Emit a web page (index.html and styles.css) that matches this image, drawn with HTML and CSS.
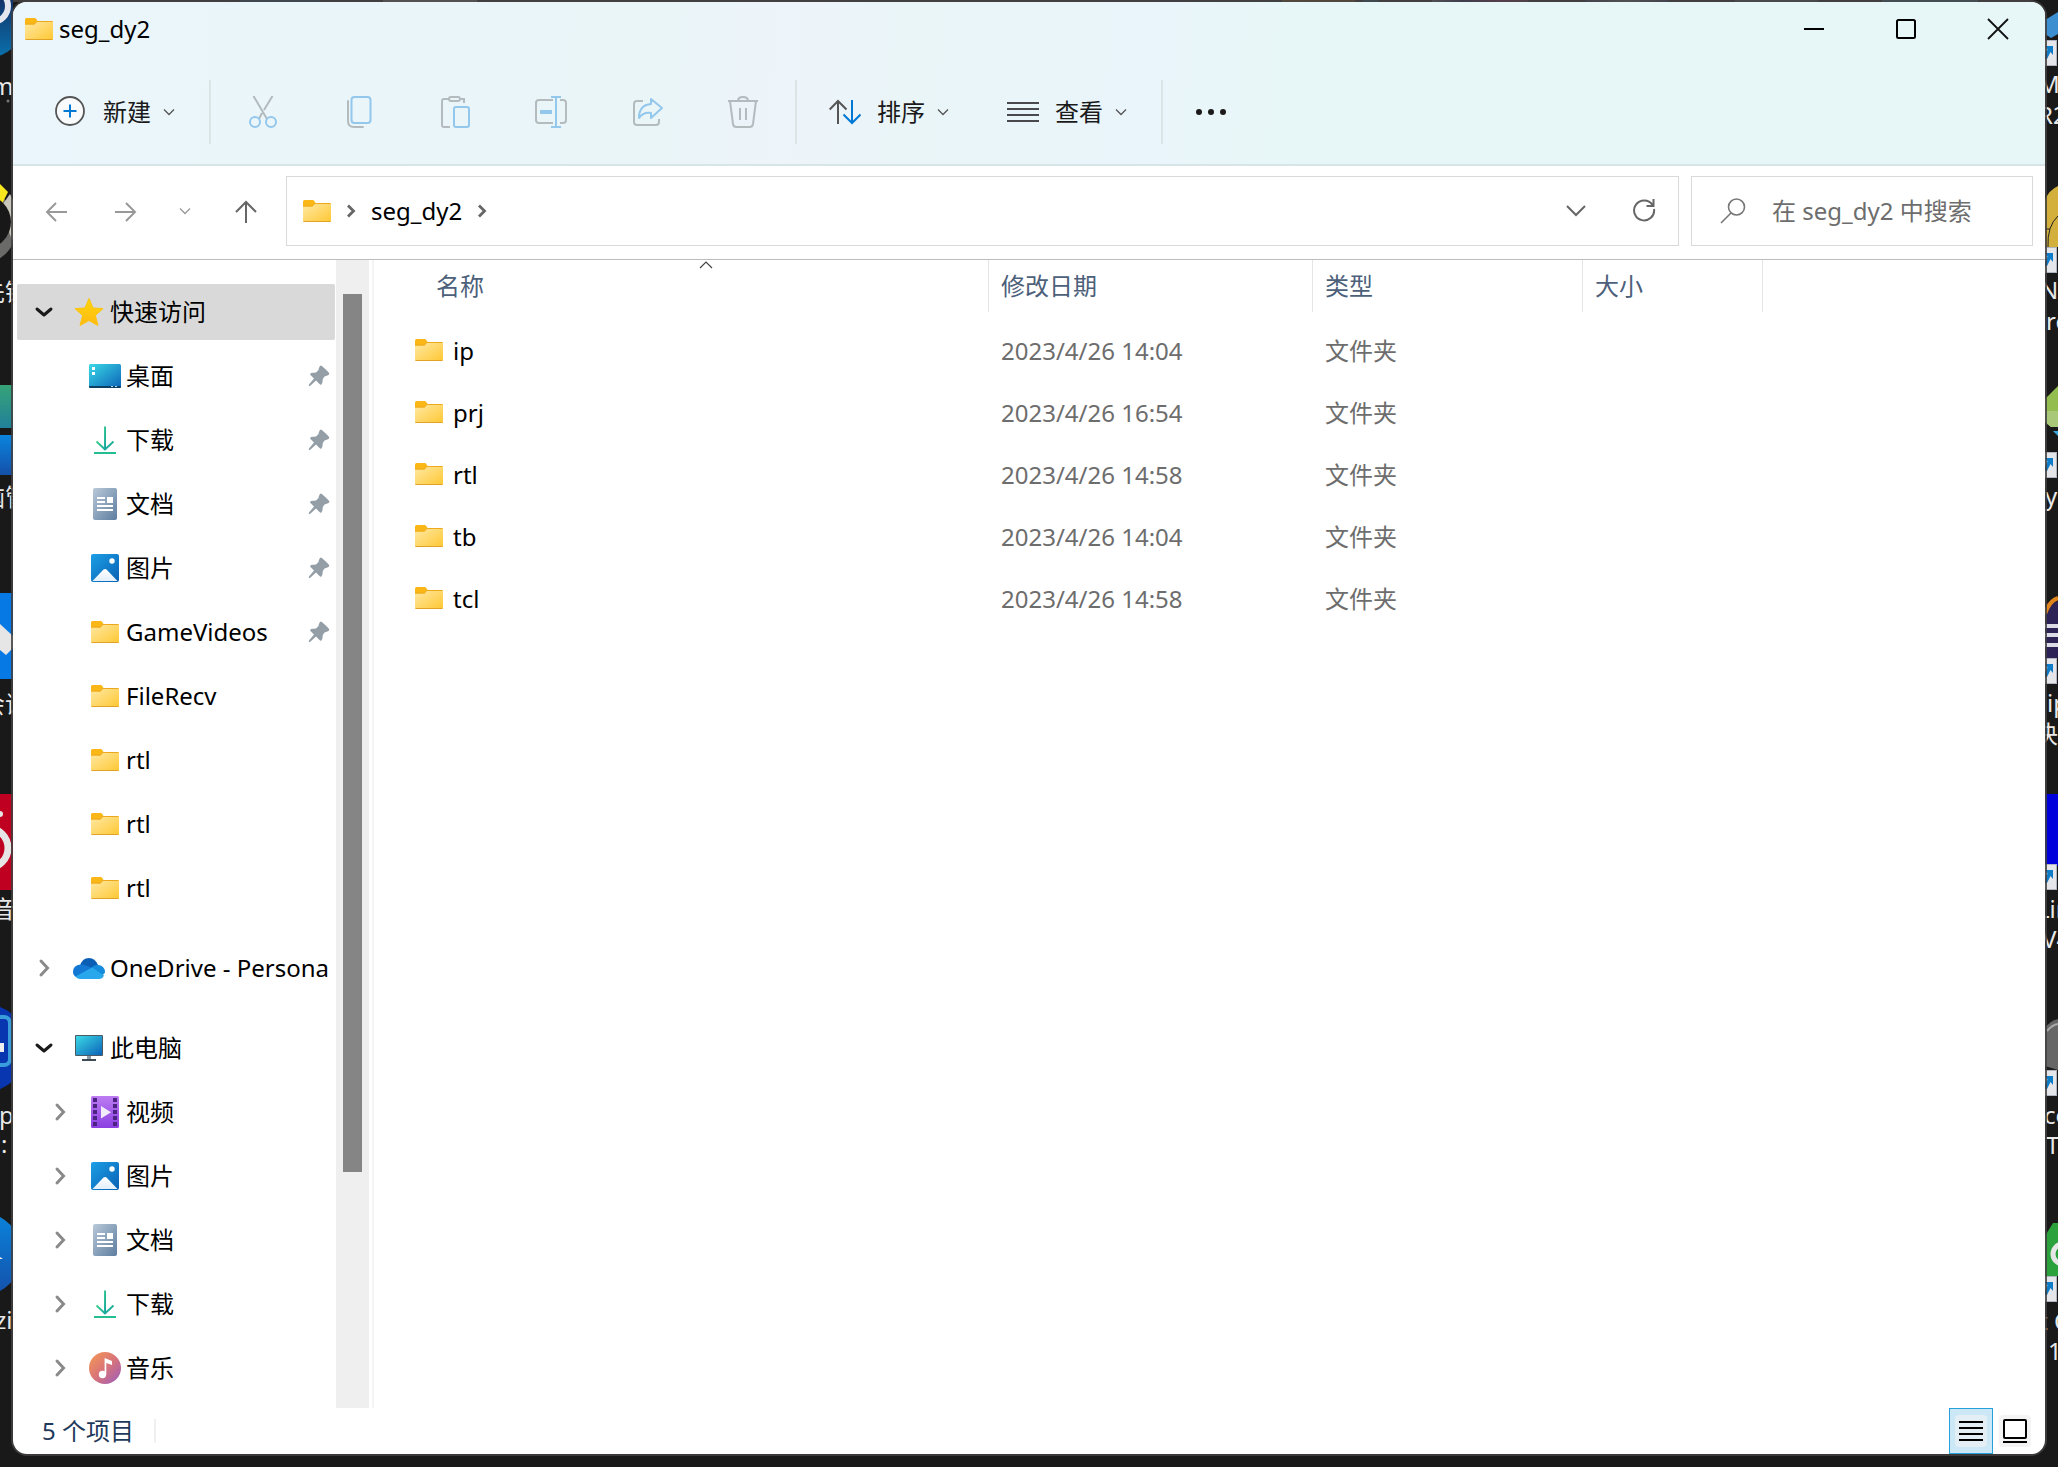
FILE: index.html
```html
<!DOCTYPE html>
<html lang="zh-CN">
<head>
<meta charset="utf-8">
<meta name="viewport" content="width=device-width, initial-scale=1">
<title>seg_dy2</title>
<link rel="stylesheet" href="styles.css">
</head>
<body>
<svg class="defs" width="0" height="0" aria-hidden="true">
  <defs>
    <linearGradient id="gFolder" x1="0" y1="0" x2="1" y2="1"><stop offset="0" stop-color="#ffe9a6"/><stop offset="1" stop-color="#ffc833"/></linearGradient>
    <linearGradient id="gScreen" x1="0" y1="0" x2="1" y2="1"><stop offset="0" stop-color="#3ad9e6"/><stop offset="1" stop-color="#0c63b8"/></linearGradient>
    <linearGradient id="gDown" x1="0" y1="0" x2="1" y2="1"><stop offset="0" stop-color="#3fd190"/><stop offset="1" stop-color="#0a9aa2"/></linearGradient>
    <linearGradient id="gDoc" x1="0" y1="0" x2="1" y2="1"><stop offset="0" stop-color="#b9c9d9"/><stop offset="1" stop-color="#5d7d9f"/></linearGradient>
    <linearGradient id="gPic" x1="0" y1="0" x2="1" y2="1"><stop offset="0" stop-color="#1c9fe6"/><stop offset="1" stop-color="#0960b3"/></linearGradient>
    <linearGradient id="gSnow" x1="0" y1="0" x2="0" y2="1"><stop offset="0" stop-color="#fff"/><stop offset="1" stop-color="#e2effb"/></linearGradient>
    <linearGradient id="gVideo" x1="0" y1="0" x2="0" y2="1"><stop offset="0" stop-color="#bd7cf2"/><stop offset="1" stop-color="#8a3fe2"/></linearGradient>
    <linearGradient id="gMusic" x1="0" y1="0" x2="1" y2="1"><stop offset="0" stop-color="#f59a50"/><stop offset=".5" stop-color="#d97478"/><stop offset="1" stop-color="#9a5cc0"/></linearGradient>
    <linearGradient id="gStar" x1="0" y1="0" x2="0" y2="1"><stop offset="0" stop-color="#ffd60a"/><stop offset="1" stop-color="#fdb913"/></linearGradient>
    <linearGradient id="gNavy" x1="0" y1="0" x2="0" y2="1"><stop offset="0" stop-color="#161a4e"/><stop offset="1" stop-color="#0a72ad"/></linearGradient>
    <linearGradient id="gTeal" x1="0" y1="0" x2="0" y2="1"><stop offset="0" stop-color="#36a377"/><stop offset="1" stop-color="#21809a"/></linearGradient>
    <linearGradient id="gBlue" x1="0" y1="0" x2="0" y2="1"><stop offset="0" stop-color="#0a84dc"/><stop offset="1" stop-color="#1450aa"/></linearGradient>
  </defs>
  <symbol id="folder" viewBox="0 0 28 22">
    <path d="M0 1.5Q0 0 1.5 0H9.5Q10.6 0 11.3 1L12.5 3V8H0z" fill="#fbb715"/>
    <path d="M0 6.5H9.5L12.2 3H27Q28 3 28 4V21Q28 22 27 22H1Q0 22 0 21z" fill="url(#gFolder)"/>
    <path d="M0 6H9.3L12 3.5H27.5" fill="none" stroke="#eda91e"/>
    <path d="M.5 21.5H27.5" stroke="#e3a126"/>
  </symbol>
  <symbol id="star" viewBox="0 0 32 32"><path d="M16 2.5L20 12 30 12.6 22.4 19.4 25 29.5 16 24.600 7 29.500 9.600 19.400 2 12.600 12 12z" fill="url(#gStar)" stroke="#fdc40c" stroke-linejoin="round"/></symbol>
  <symbol id="desktop" viewBox="0 0 32 32"><rect y="4" width="32" height="24" rx="1.500" fill="url(#gScreen)"/><path d="M0 26H32V26.500Q32 28 30.500 28H1.500Q0 28 0 26.500z" fill="#0b3f63"/><path d="M3 7h3v3h-3zM3 12h3v3h-3z" fill="#fff"/><path d="M22 26.500h2M26 26.500h2" stroke="#b8d8f0"/></symbol>
  <symbol id="download" viewBox="0 0 32 32"><path d="M15 2.500H17V26H15z" fill="url(#gDown)"/><path d="M7.500 17.500L16 25.500 24.500 17.500" fill="none" stroke="url(#gDown)" stroke-width="2"/><rect x="5" y="28" width="22" height="2" fill="#24bd92"/></symbol>
  <symbol id="document" viewBox="0 0 32 32"><rect x="4" width="24" height="32" rx="2" fill="url(#gDoc)"/><path d="M8 9h8v2h-8zM8 13h8v2h-8zM18 9h6v6h-6zM8 17h16v2h-16zM8 21h16v2h-16z" fill="#fff"/></symbol>
  <symbol id="picture" viewBox="0 0 32 32"><rect x="2" y="2" width="28" height="28" rx="2" fill="url(#gPic)"/><path d="M3.500 29L14.500 17.600Q16 16.300 17.500 17.600L28.500 29z" fill="url(#gSnow)"/><circle cx="23" cy="9" r="2.700" fill="#fff"/></symbol>
  <symbol id="video" viewBox="0 0 32 32"><rect x="2" width="28" height="32" rx="1.500" fill="url(#gVideo)"/><path d="M6 2V32M26 2V32" stroke="#4c2382" stroke-width="4" stroke-dasharray="4 2"/><path d="M12 10V22.500L22 16.200z" fill="#f1eaf9"/></symbol>
  <symbol id="music" viewBox="0 0 32 32"><circle cx="16" cy="16" r="16" fill="url(#gMusic)"/><circle cx="13.500" cy="22.500" r="3.700" fill="#fff"/><path d="M15.600 22.500V6L23 9V13L17.300 11V22.500z" fill="#fff"/></symbol>
  <symbol id="cloud" viewBox="0 0 32 32"><path d="M7 14Q9 6 16 6 22 6 25 13L17 18z" fill="#0a5fb4"/><path d="M0 20Q0 13 7.500 12.500 11 12 19 16L5 26Q0 24 0 20z" fill="#1278d3"/><path d="M18 16Q21 12.500 25.500 13 32 14 32 20.500L28 25z" fill="#158bdc"/><path d="M2.500 24.500L19 15.500 31 23.500Q29.500 27 26 27H7Q4.500 27 2.500 24.500z" fill="#29a7ec"/></symbol>
  <symbol id="computer" viewBox="0 0 32 32"><rect x="2" y="3" width="28" height="21" rx="1" fill="#4a5a66"/><rect x="3" y="4" width="26" height="19" fill="url(#gScreen)"/><path d="M14 24h4v3h-4z" fill="#8b9aa5"/><path d="M9 27h14v2h-14z" fill="#3f4c56"/></symbol>
  <symbol id="pin" viewBox="0 0 22 22"><path d="M13 .5Q14 .5 21.200 8 21.800 9.500 20 10.200L16.500 11.500Q14.500 13 14.500 17L13.500 19.500Q12.500 20.300 11.500 19L8 15.500 2 21Q.5 21.300 .8 19.800L6 13.500 2.500 10Q1.500 8.500 3 8L8 7.500 10.500 5Q11 1 13 .5z" fill="#939ea6"/></symbol>
  <symbol id="v" viewBox="0 0 12 12"><path d="M1 3.500L6 8.500 11 3.500" fill="none" stroke="currentColor" stroke-width="1.300"/></symbol>
  <symbol id="openv" viewBox="0 0 24 24"><path d="M5 9L12 15 19 9" fill="none" stroke="currentColor" stroke-width="3" stroke-linecap="round" stroke-linejoin="round"/></symbol>
  <symbol id="closedv" viewBox="0 0 24 24"><path d="M9 5L15.500 12 9 19" fill="none" stroke="currentColor" stroke-width="3" stroke-linecap="round"/></symbol>
  <symbol id="crumb" viewBox="0 0 12 16"><path d="M3 2.500L8.500 8 3 13.500" fill="none" stroke="#666" stroke-width="2.800"/></symbol>
  <symbol id="shortcut" viewBox="0 0 13 26"><rect x="-14" y=".5" width="25.500" height="25" fill="#e4e6ea" stroke="#b0b5c0"/><path d="M0 6H8V15L5.500 12 2 19H-2L2.500 9.500z" fill="#0f7cc8"/></symbol>
</svg>

<svg class="edge edge-left" width="13" height="1467" aria-hidden="true">
  <circle cx="-14" cy="17" r="41" fill="url(#gNavy)"/><circle cx="-8" cy="6" r="16" fill="none" stroke="#e6e6ee" stroke-width="6"/>
  <text x="-9" y="95">m</text><circle cx="8" cy="101" r="1.500" fill="#777"/>
  <circle cx="-20" cy="227" r="37" fill="#6a6a68"/><path d="M0 208L10 194 20 214V240L12 240z" fill="#c9c6bb"/><path d="M0 184L8 192-2 212z" fill="#f8e71c"/><circle cx="-16" cy="222" r="27" fill="#181818"/>
  <text x="-19" y="301">先锋</text>
  <rect width="13" height="43" y="385" fill="url(#gTeal)"/><rect x="-20" y="435" width="50" height="40" rx="18" fill="url(#gBlue)"/>
  <text x="-19" y="506">脑管</text>
  <rect width="13" height="86" y="593" fill="#0779e4"/><path d="M0 624L13 636V648L6 655 0 650z" fill="#e6e6e6"/>
  <text x="-19" y="713">会议</text>
  <rect width="13" height="96" y="794" fill="#c00020"/><circle cx="-12" cy="848" r="20" fill="none" stroke="#e6e6e6" stroke-width="7"/><circle cx="0" cy="814" r="3" fill="#e6e6e6"/>
  <text x="-9" y="918">音</text>
  <circle cx="-16" cy="1048" r="44" fill="#0836b0"/><rect x="-20" y="1017" width="30" height="48" rx="6" fill="none" stroke="#399ddc" stroke-width="4"/><path d="M0 1043h4v9h-4z" fill="#eee"/>
  <text x="-1" y="1124">p</text><text x="1" y="1153">:</text>
  <circle cx="-20" cy="1254" r="42" fill="url(#gBlue)"/><path d="M0 1257l3 2H0z" fill="#eee"/>
  <text x="-5" y="1329">zi</text>
</svg>
<svg class="edge edge-right" width="13" height="1467" aria-hidden="true">
  <path d="M0 20L13 12V34L6 38 0 34z" fill="#3b8ed0"/><use href="#shortcut" y="40" width="13" height="26"/>
  <text x="-7" y="93">MA</text><text x="-7" y="124">R2</text>
  <path d="M0 200Q4 190 13 186V247H0z" fill="#d2b03b"/><path d="M0 229H5M3 247Q2 226 13 216" fill="none" stroke="#222"/><use href="#shortcut" y="247" width="13" height="26"/>
  <text x="-5" y="299">N.</text><text x="1" y="330">re</text>
  <path d="M0 399L13 386V427H6L0 422z" fill="#93bd4f"/><path d="M0 411H13V427H6L0 422z" fill="#a9c979"/><path d="M8 431H13V436z" fill="#39a8d8"/><use href="#shortcut" y="452" width="13" height="26"/>
  <text x="0" y="505">y</text>
  <path d="M0 616Q4 604 13 601V658H0z" fill="#2c2255"/><path d="M0 614Q4 601 13 598" fill="none" stroke="#e0841e" stroke-width="4"/><path d="M0 626h13M0 635h13M0 645h13" stroke="#dcdce6" stroke-width="4"/><use href="#shortcut" y="658" width="13" height="26"/>
  <text x="2" y="712">ip</text><text x="-11" y="743">决</text>
  <rect width="13" height="72" y="794" fill="#0000dc"/><use href="#shortcut" y="864" width="13" height="26"/>
  <text x="-8" y="918">Lin</text><text x="-3" y="948">V4</text>
  <path d="M0 1028Q5 1021 13 1019V1070L0 1066z" fill="#666"/><path d="M2 1031Q7 1025 13 1024" fill="none" stroke="#aaa" stroke-width="2"/><use href="#shortcut" y="1070" width="13" height="26"/>
  <text x="-1" y="1124">co</text><text x="1" y="1154">T</text>
  <path d="M0 1236L8 1223H13V1276H0z" fill="#2ba23c"/><circle cx="18" cy="1254" r="10" fill="none" stroke="#e6e6e6" stroke-width="5"/><use href="#shortcut" y="1276" width="13" height="26"/>
  <text x="-6" y="1330">t C</text><text x="3" y="1360">1</text>
</svg>

<main class="window">
  <header class="chrome">
    <div class="titlebar">
      <svg class="folder"><use href="#folder"/></svg>
      <h1>seg_dy2</h1>
      <div class="controls">
        <button aria-label="最小化"><svg width="22" height="22" fill="none" stroke="#000" stroke-width="2"><path d="M1 11H21"/></svg></button>
        <button aria-label="最大化"><svg width="22" height="22" fill="none" stroke="#000" stroke-width="2"><rect x="2" y="2" width="18" height="18" rx="1.500"/></svg></button>
        <button aria-label="关闭"><svg width="22" height="22" fill="none" stroke="#111" stroke-width="1.800"><path d="M1 1L21 21M21 1L1 21"/></svg></button>
      </div>
    </div>
    <div class="toolbar">
      <button class="command"><svg width="32" height="32" fill="none"><circle cx="15" cy="15" r="14" fill="#f8fafb" stroke="#555" stroke-width="1.800"/><path d="M8.500 15H21.500M15 8.500V21.500" stroke="#0078d4" stroke-width="2"/></svg>新建<svg class="drop"><use href="#v"/></svg></button>
      <span class="rule"></span>
      <div class="tools">
        <button disabled aria-label="剪切"><svg width="32" height="32" fill="none" stroke-width="2"><path d="M6.500 0L20 23M25.500 0L17 14M15 17L12 23" stroke="#b3bbbe"/><circle cx="8" cy="26" r="5" stroke="#93c7ec"/><circle cx="24" cy="26" r="5" stroke="#93c7ec"/></svg></button>
        <button disabled aria-label="复制"><svg width="32" height="32" fill="none" stroke-width="2"><path d="M5 5V25Q5 31 11 31H20" stroke="#b3bbbe" stroke-linecap="round"/><rect x="8.500" y="1" width="19" height="26" rx="3" stroke="#93c7ec"/></svg></button>
        <button disabled aria-label="粘贴"><svg width="32" height="32" fill="none" stroke-width="2"><path d="M10 3H5Q3 3 3 5V29Q3 31 5 31H11M22 3H25V7" stroke="#b3bbbe"/><rect x="10" y="1" width="11" height="4" rx="2" stroke="#b3bbbe"/><rect x="15" y="11" width="15" height="20" rx="2" stroke="#93c7ec"/></svg></button>
        <button disabled aria-label="重命名"><svg width="34" height="32" fill="none" stroke-width="2"><path d="M19 4H5Q2 4 2 7V24Q2 27 5 27H19M26 4H29Q32 4 32 7V24Q32 27 29 27H26" stroke="#b3bbbe"/><path d="M17 1H27M17 31H27M22 1V31" stroke="#93c7ec"/><path d="M6 16H18" stroke="#93c7ec" stroke-width="4"/></svg></button>
        <button disabled aria-label="共享"><svg width="32" height="32" fill="none" stroke-width="2" stroke-linejoin="round"><path d="M12 5H6Q3 5 3 8V26Q3 29 6 29H25Q28 29 28 26V23" stroke="#b3bbbe"/><path d="M20 3L31 12 20 22V17Q12 16 8 22 8 9 20 8z" stroke="#93c7ec"/></svg></button>
        <button disabled aria-label="删除"><svg width="32" height="32" fill="none" stroke="#b3bbbe" stroke-width="2"><path d="M1 5H31M11 5Q11 1 16 1T21 5M3 5L6 28Q6.500 31 9.500 31H22.500Q25.500 31 26 28L29 5M13 12V24M19 12V24"/></svg></button>
      </div>
      <span class="rule"></span>
      <button class="command sort"><svg width="32" height="32" fill="none" stroke-width="2"><path d="M9 28V5M0.700 13.500L9 5 17.500 13.500" stroke="#555"/><path d="M23 4V27M14.500 18.500L23 27 31.500 18.500" stroke="#0078d4"/></svg>排序<svg class="drop"><use href="#v"/></svg></button>
      <button class="command"><svg width="32" height="32" stroke="#4a4a4e" stroke-width="2"><path d="M0 7H32M0 13H32M0 19H32M0 25H32"/></svg>查看<svg class="drop"><use href="#v"/></svg></button>
      <span class="rule"></span>
      <button class="command" aria-label="查看更多"><svg width="32" height="32" fill="#1a1a1a"><circle cx="4" cy="16" r="3"/><circle cx="16" cy="16" r="3"/><circle cx="28" cy="16" r="3"/></svg></button>
    </div>
  </header>

  <nav class="navbar">
    <button aria-label="后退"><svg width="24" height="24" fill="none" stroke="#999" stroke-width="2"><path d="M22 13H2M11 4L2 13 11 22"/></svg></button>
    <button aria-label="前进"><svg width="24" height="24" fill="none" stroke="#999" stroke-width="2"><path d="M2 13H22M13 4L22 13 13 22"/></svg></button>
    <button class="recent" aria-label="最近位置"><svg class="drop"><use href="#v"/></svg></button>
    <button aria-label="向上"><svg width="24" height="24" fill="none" stroke="#666" stroke-width="2"><path d="M13 24V3M3 13L13 3 23 13"/></svg></button>
    <div class="address">
      <svg class="folder"><use href="#folder"/></svg>
      <svg class="crumb"><use href="#crumb"/></svg>
      <a href="#">seg_dy2</a>
      <svg class="crumb"><use href="#crumb"/></svg>
      <span class="grow"></span>
      <button aria-label="历史记录"><svg width="24" height="24" fill="none" stroke="#666" stroke-width="2"><path d="M3 7L12 16 21 7"/></svg></button>
      <button aria-label="刷新"><svg width="24" height="24" fill="none" stroke="#666" stroke-width="2"><path d="M20.500 6A10 10 0 1 0 22 10M21.500 0V7H14.500"/></svg></button>
    </div>
    <label class="search">
      <svg width="26" height="26" fill="none" stroke="#777" stroke-width="1.600"><circle cx="16.500" cy="9" r="8"/><path d="M11 15L1 25"/></svg>
      <input type="search" aria-label="搜索" placeholder="在 seg_dy2 中搜索">
    </label>
  </nav>

  <div class="panes">
    <aside class="sidebar">
      <ul class="tree">
        <li class="row selected"><button class="open" aria-label="折叠"><svg><use href="#openv"/></svg></button><a href="#"><svg class="icon"><use href="#star"/></svg>快速访问</a></li>
        <li class="row child"><a href="#"><svg class="icon"><use href="#desktop"/></svg>桌面</a><svg class="pin"><use href="#pin"/></svg></li>
        <li class="row child"><a href="#"><svg class="icon"><use href="#download"/></svg>下载</a><svg class="pin"><use href="#pin"/></svg></li>
        <li class="row child"><a href="#"><svg class="icon"><use href="#document"/></svg>文档</a><svg class="pin"><use href="#pin"/></svg></li>
        <li class="row child"><a href="#"><svg class="icon"><use href="#picture"/></svg>图片</a><svg class="pin"><use href="#pin"/></svg></li>
        <li class="row child"><a href="#"><svg class="icon small"><use href="#folder"/></svg>GameVideos</a><svg class="pin"><use href="#pin"/></svg></li>
        <li class="row child"><a href="#"><svg class="icon small"><use href="#folder"/></svg>FileRecv</a></li>
        <li class="row child"><a href="#"><svg class="icon small"><use href="#folder"/></svg>rtl</a></li>
        <li class="row child"><a href="#"><svg class="icon small"><use href="#folder"/></svg>rtl</a></li>
        <li class="row child"><a href="#"><svg class="icon small"><use href="#folder"/></svg>rtl</a></li>
      </ul>
      <ul class="tree">
        <li class="row"><button aria-label="展开"><svg><use href="#closedv"/></svg></button><a href="#"><svg class="icon"><use href="#cloud"/></svg>OneDrive - Persona</a></li>
      </ul>
      <ul class="tree">
        <li class="row"><button class="open" aria-label="折叠"><svg><use href="#openv"/></svg></button><a href="#"><svg class="icon"><use href="#computer"/></svg>此电脑</a></li>
        <li class="row child"><button aria-label="展开"><svg><use href="#closedv"/></svg></button><a href="#"><svg class="icon"><use href="#video"/></svg>视频</a></li>
        <li class="row child"><button aria-label="展开"><svg><use href="#closedv"/></svg></button><a href="#"><svg class="icon"><use href="#picture"/></svg>图片</a></li>
        <li class="row child"><button aria-label="展开"><svg><use href="#closedv"/></svg></button><a href="#"><svg class="icon"><use href="#document"/></svg>文档</a></li>
        <li class="row child"><button aria-label="展开"><svg><use href="#closedv"/></svg></button><a href="#"><svg class="icon"><use href="#download"/></svg>下载</a></li>
        <li class="row child"><button aria-label="展开"><svg><use href="#closedv"/></svg></button><a href="#"><svg class="icon"><use href="#music"/></svg>音乐</a></li>
      </ul>
    </aside>
    <div class="scrollbar"><span class="thumb"></span></div>
    <section class="files">
      <table>
        <colgroup><col class="c-name"><col class="c-date"><col class="c-type"><col class="c-size"><col></colgroup>
        <thead>
          <tr>
            <th><div class="head name">名称<svg class="caret" viewBox="0 0 14 8"><path d="M1 7L7 1 13 7" fill="none" stroke="#444" stroke-width="1.200"/></svg></div></th>
            <th><div class="head">修改日期</div></th>
            <th><div class="head">类型</div></th>
            <th><div class="head">大小</div></th>
            <td></td>
          </tr>
        </thead>
        <tbody>
          <tr><td><a href="#"><svg class="folder"><use href="#folder"/></svg>ip</a></td><td>2023/4/26 14:04</td><td>文件夹</td><td></td><td></td></tr>
          <tr><td><a href="#"><svg class="folder"><use href="#folder"/></svg>prj</a></td><td>2023/4/26 16:54</td><td>文件夹</td><td></td><td></td></tr>
          <tr><td><a href="#"><svg class="folder"><use href="#folder"/></svg>rtl</a></td><td>2023/4/26 14:58</td><td>文件夹</td><td></td><td></td></tr>
          <tr><td><a href="#"><svg class="folder"><use href="#folder"/></svg>tb</a></td><td>2023/4/26 14:04</td><td>文件夹</td><td></td><td></td></tr>
          <tr><td><a href="#"><svg class="folder"><use href="#folder"/></svg>tcl</a></td><td>2023/4/26 14:58</td><td>文件夹</td><td></td><td></td></tr>
        </tbody>
      </table>
    </section>
  </div>

  <footer class="status">
    <span class="count">5 个项目</span>
    <span class="grow"></span>
    <button class="view on" aria-label="详细信息"><svg width="32" height="32" stroke="#000" stroke-width="2"><rect width="32" height="32" rx="4" fill="#e4eef5" stroke="none"/><path d="M4 7H28M4 13H28M4 19H28M4 25H28"/></svg></button>
    <button class="view" aria-label="大图标"><svg width="32" height="32" fill="none" stroke="#000" stroke-width="2"><rect width="32" height="32" rx="4" fill="#f4f4f4" stroke="none"/><rect x="5" y="5" width="22" height="18" rx="1" fill="#fff"/><path d="M4 27H28"/></svg></button>
  </footer>
</main>
</body>
</html>
```
FILE: styles.css
```css
* { box-sizing: border-box; }

body {
  margin: 0;
  height: 100vh;
  position: relative;
  overflow: hidden;
  display: flex;
  padding: 2px 13px 13px;
  color: #000;
  font: 24px/32px "Noto Sans", "Noto Sans CJK SC", sans-serif;
  background:
    linear-gradient(#2e6da4, #2e6da4) 240px 0 / 80px 2px no-repeat,
    linear-gradient(#b5b5b5, #b5b5b5) 383px 0 / 94px 2px no-repeat,
    linear-gradient(#b27a2e, #b27a2e) 1282px 0 / 73px 2px no-repeat,
    linear-gradient(#2e80a4, #2e80a4) 1363px 0 / 15px 2px no-repeat,
    linear-gradient(90deg, #a09ac0, #2a3090, #c03a90, #a04a70) 1432px 0 / 96px 2px no-repeat,
    linear-gradient(90deg, #4a60a0, #a0b0b0, #4a60a0) 1585px 0 / 83px 2px no-repeat,
    linear-gradient(#6a8090, #6a8090) 1735px 0 / 83px 2px no-repeat,
    linear-gradient(#4a9ab8, #4a9ab8) 1882px 0 / 96px 2px no-repeat,
    linear-gradient(#403c3c, #403c3c) 13px 0 / calc(100% - 40px) 2px no-repeat,
    #191919;
}

button {
  display: flex;
  align-items: center;
  justify-content: center;
  flex: none;
  margin: 0;
  padding: 0;
  border: 0;
  background: none;
  color: inherit;
  font: inherit;
}
a { color: inherit; text-decoration: none; }
svg { display: block; flex: none; }
.defs { position: absolute; }
.grow { flex: 1; }
.folder { width: 28px; height: 22px; }
.drop { width: 12px; height: 12px; color: #555; }

/* desktop icons that show on both sides of the window */
.edge { position: absolute; top: 0; overflow: hidden; fill: #e8e8e8; }
.edge-left { left: 0; }
.edge-right { right: 0; }

.window {
  position: relative;
  flex: 1;
  min-width: 0;
  display: flex;
  flex-direction: column;
  overflow: hidden;
  border-radius: 14px;
  background: #fff;
  box-shadow: 0 0 0 2px rgba(66, 64, 64, .85);
}

.chrome {
  background: linear-gradient(95deg, #eaf6fb, #eaf5f8 32%, #edf4fa 38%, #eaf5f8 44%, #eaf5fb 55%, #e7f7f7 64%);
  border-bottom: 2px solid #d8e5e6;
}
.titlebar { display: flex; align-items: center; height: 54px; padding: 0 1px 0 12px; }
.titlebar h1 { flex: 1; margin: 0 0 0 6px; font-size: 24px; font-weight: 400; line-height: 32px; }
.controls { display: flex; align-self: stretch; }
.controls button { width: 92px; }

.toolbar { display: flex; align-items: center; height: 108px; padding: 4px 0 0 42px; color: #1a1a1a; }
.command { gap: 16px; height: 64px; }
.command .drop { margin-left: -4px; }
.sort { margin-right: 58px; }
.rule { width: 2px; height: 64px; margin: 0 32px 0 34px; background: #dbe5e6; }
.tools { display: flex; margin: 0 -30px 0 -28px; }
.tools button { width: 96px; height: 64px; }

.navbar {
  display: flex;
  align-items: stretch;
  height: 94px;
  padding: 10px 12px 13px 10px;
  border-bottom: 1px solid #bcbcbc;
}
.navbar > button { width: 68px; }
.navbar > .recent { width: 52px; }
.recent .drop { color: #999; }
.address {
  flex: 1;
  display: flex;
  align-items: center;
  margin: 0 12px 0 7px;
  padding-left: 16px;
  border: 1px solid #d9d9d9;
}
.address button { width: 68px; height: 64px; }
.crumb { width: 12px; height: 16px; margin: 0 14px; }
.search {
  width: 342px;
  display: flex;
  align-items: center;
  gap: 26px;
  padding-left: 28px;
  border: 1px solid #d9d9d9;
}
.search input { flex: 1; min-width: 0; padding: 0; border: 0; outline: 0; background: none; font: inherit; }
.search input::placeholder { color: #6d6d6d; opacity: 1; }

.panes { flex: 1; min-height: 0; display: flex; }
.sidebar { width: 323px; padding: 24px 1px 0 4px; overflow: hidden; }
.tree { margin: 0 0 24px; padding: 0; list-style: none; }
.row {
  display: flex;
  align-items: center;
  height: 56px;
  margin-bottom: 8px;
  padding-left: 15px;
  border-radius: 2px;
  white-space: nowrap;
  overflow: hidden;
}
.row.child { padding-left: 31px; }
.row.selected { background: #d9d9d9; }
.row button { width: 24px; height: 24px; color: #8a8a8a; }
.row .open { color: #1a1a1a; }
.row button svg { width: 24px; height: 24px; }
.row a { flex: 1; display: flex; align-items: center; gap: 5px; margin-left: 17px; }
.row > a:first-child { margin-left: 41px; }
.icon { width: 32px; height: 32px; }
.icon.small { height: 22px; }
.pin { width: 22px; height: 22px; margin-right: 5px; }

.scrollbar {
  width: 33px;
  display: flex;
  flex-direction: column;
  padding: 34px 7px 0;
  background: #efefef;
}
.thumb { flex: 878; background: #858585; }
.scrollbar::after { content: ""; flex: 236; }

.files { flex: 1; min-width: 0; margin-left: 3px; border-left: 2px solid #f4f4f4; }
table { width: 100%; table-layout: fixed; border-collapse: collapse; }
.c-name { width: 615px; }
.c-date { width: 324px; }
.c-type { width: 270px; }
.c-size { width: 180px; }
th, td { padding: 0; text-align: left; font-weight: 400; }
th { height: 60px; vertical-align: top; color: #4c607a; }
.head { position: relative; height: 52px; padding: 10px 0 10px 12px; border-right: 1px solid #e5e5e5; }
.head.name { padding-left: 62px; }
.caret { position: absolute; top: 1px; left: 325px; width: 14px; height: 8px; }
tbody td { height: 62px; padding-left: 12px; color: #6d6d6d; }
tbody td:first-child { padding-left: 41px; color: #000; }
tbody a { display: flex; align-items: center; gap: 10px; }
tbody .folder { margin-bottom: 2px; }

.status { display: flex; align-items: center; height: 46px; padding: 0 8px 0 29px; color: #1e395b; }
.count { padding-right: 20px; border-right: 2px solid #f0f0f0; line-height: 24px; }
.view { width: 44px; height: 46px; }
.view.on { border: 1px solid #26a0da; background: #cce8f6; }
```
